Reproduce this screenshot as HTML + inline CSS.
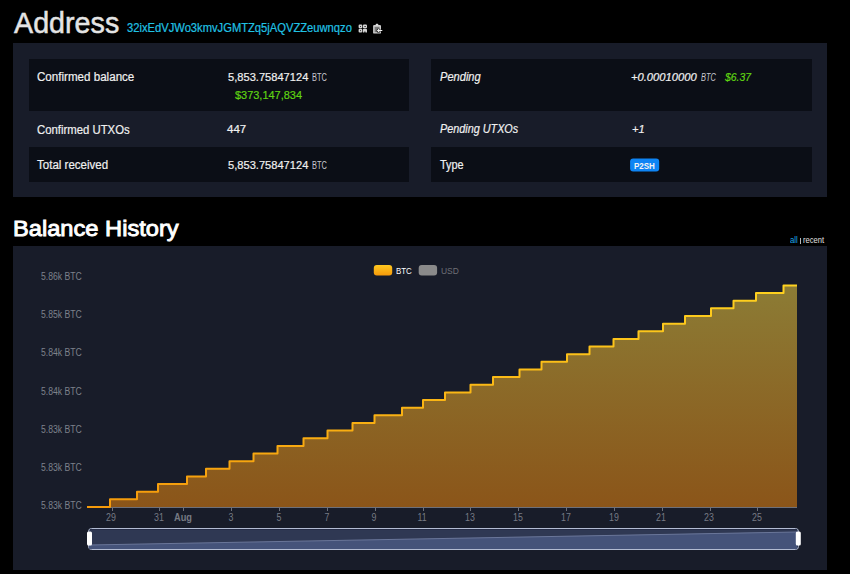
<!DOCTYPE html>
<html><head><meta charset="utf-8"><style>
html,body{margin:0;padding:0;background:#000;width:850px;height:574px;overflow:hidden}
body{position:relative;font-family:"Liberation Sans",sans-serif}
.t{position:absolute;line-height:1;white-space:nowrap;z-index:3}
.panel{position:absolute;background:#181c29;z-index:0}
.dk{position:absolute;background:#0b0e16;z-index:1}
.ch{position:absolute;left:0;top:0;z-index:2}
</style></head><body>
<div class="panel" style="left:13px;top:43px;width:814px;height:154px"></div>
<div class="dk" style="left:29px;top:59px;width:380px;height:52px"></div>
<div class="dk" style="left:29px;top:147px;width:380px;height:35px"></div>
<div class="dk" style="left:431px;top:59px;width:381px;height:52px"></div>
<div class="dk" style="left:431px;top:147px;width:381px;height:35px"></div>
<svg class="ch" width="850" height="574" viewBox="0 0 850 574"><rect x="630.1" y="158.5" width="29.1" height="13" rx="3" fill="#0e84f4"/></svg>
<div class="t" style="left:13.60px;top:7.61px;font-size:30px;color:#e4e4e4;letter-spacing:0px;font-weight:normal;font-style:normal;transform:scaleX(0.9564);transform-origin:0 0;-webkit-text-stroke:0.5px currentColor;">Address</div>
<div class="t" style="left:127.00px;top:21.84px;font-size:12px;color:#20c2e4;letter-spacing:0px;font-weight:normal;font-style:normal;transform:scaleX(0.9324);transform-origin:0 0;-webkit-text-stroke:0.2px currentColor;">32ixEdVJWo3kmvJGMTZq5jAQVZZeuwnqzo</div>
<div class="t" style="left:37.00px;top:71.42px;font-size:12.5px;color:#f0f0f0;letter-spacing:0px;font-weight:normal;font-style:normal;transform:scaleX(0.9276);transform-origin:0 0;-webkit-text-stroke:0.2px currentColor;">Confirmed balance</div>
<div class="t" style="left:227.80px;top:72.27px;font-size:11.5px;color:#f0f0f0;letter-spacing:0px;font-weight:normal;font-style:normal;transform:scaleX(0.9663);transform-origin:0 0;-webkit-text-stroke:0.2px currentColor;">5,853.75847124</div>
<div class="t" style="left:311.70px;top:73.33px;font-size:10px;color:#c8c8d0;letter-spacing:0px;font-weight:normal;font-style:normal;transform:scaleX(0.7400);transform-origin:0 0;">BTC</div>
<div class="t" style="left:234.90px;top:89.87px;font-size:11.5px;color:#5fd312;letter-spacing:0px;font-weight:normal;font-style:normal;transform:scaleX(0.9521);transform-origin:0 0;-webkit-text-stroke:0.2px currentColor;">$373,147,834</div>
<div class="t" style="left:37.00px;top:124.42px;font-size:12.5px;color:#f0f0f0;letter-spacing:0px;font-weight:normal;font-style:normal;transform:scaleX(0.9078);transform-origin:0 0;-webkit-text-stroke:0.2px currentColor;">Confirmed UTXOs</div>
<div class="t" style="left:227.00px;top:123.77px;font-size:11.5px;color:#f0f0f0;letter-spacing:0px;font-weight:normal;font-style:normal;transform:scaleX(1.0000);transform-origin:0 0;-webkit-text-stroke:0.2px currentColor;">447</div>
<div class="t" style="left:37.00px;top:159.42px;font-size:12.5px;color:#f0f0f0;letter-spacing:0px;font-weight:normal;font-style:normal;transform:scaleX(0.9221);transform-origin:0 0;-webkit-text-stroke:0.2px currentColor;">Total received</div>
<div class="t" style="left:227.80px;top:160.07px;font-size:11.5px;color:#f0f0f0;letter-spacing:0px;font-weight:normal;font-style:normal;transform:scaleX(0.9663);transform-origin:0 0;-webkit-text-stroke:0.2px currentColor;">5,853.75847124</div>
<div class="t" style="left:311.70px;top:161.13px;font-size:10px;color:#c8c8d0;letter-spacing:0px;font-weight:normal;font-style:normal;transform:scaleX(0.7400);transform-origin:0 0;">BTC</div>
<div class="t" style="left:440.00px;top:71.22px;font-size:12.5px;color:#f0f0f0;letter-spacing:0px;font-weight:normal;font-style:italic;transform:scaleX(0.8870);transform-origin:0 0;-webkit-text-stroke:0.2px currentColor;">Pending</div>
<div class="t" style="left:631.20px;top:71.87px;font-size:11.5px;color:#f0f0f0;letter-spacing:0px;font-weight:normal;font-style:italic;transform:scaleX(0.9735);transform-origin:0 0;-webkit-text-stroke:0.2px currentColor;">+0.00010000</div>
<div class="t" style="left:700.70px;top:73.13px;font-size:10px;color:#c8c8d0;letter-spacing:0px;font-weight:normal;font-style:italic;transform:scaleX(0.7400);transform-origin:0 0;">BTC</div>
<div class="t" style="left:725.40px;top:71.87px;font-size:11.5px;color:#5fd312;letter-spacing:0px;font-weight:normal;font-style:italic;transform:scaleX(0.9067);transform-origin:0 0;-webkit-text-stroke:0.2px currentColor;">$6.37</div>
<div class="t" style="left:440.30px;top:122.62px;font-size:12.5px;color:#f0f0f0;letter-spacing:0px;font-weight:normal;font-style:italic;transform:scaleX(0.8656);transform-origin:0 0;-webkit-text-stroke:0.2px currentColor;">Pending UTXOs</div>
<div class="t" style="left:631.50px;top:124.47px;font-size:11.5px;color:#f0f0f0;letter-spacing:0px;font-weight:normal;font-style:italic;transform:scaleX(0.9615);transform-origin:0 0;-webkit-text-stroke:0.2px currentColor;">+1</div>
<div class="t" style="left:440.30px;top:159.42px;font-size:12.5px;color:#f0f0f0;letter-spacing:0px;font-weight:normal;font-style:normal;transform:scaleX(0.8704);transform-origin:0 0;-webkit-text-stroke:0.2px currentColor;">Type</div>
<div class="t" style="left:634.00px;top:162.28px;font-size:9px;color:#f4f4f4;letter-spacing:0px;font-weight:bold;font-style:normal;transform:scaleX(0.8875);transform-origin:0 0;">P2SH</div>
<div class="t" style="left:12.85px;top:217.75px;font-size:22.5px;color:#ffffff;letter-spacing:0px;font-weight:normal;font-style:normal;transform:scaleX(1.0516);transform-origin:0 0;-webkit-text-stroke:0.9px currentColor;">Balance History</div>
<div class="t" style="left:790.20px;top:235.98px;font-size:9px;color:#1ea8ea;letter-spacing:0px;font-weight:normal;font-style:normal;transform:scaleX(0.8667);transform-origin:0 0;">all</div>
<div class="t" style="left:803.00px;top:235.98px;font-size:9px;color:#e0e0e0;letter-spacing:0px;font-weight:normal;font-style:normal;transform:scaleX(0.8400);transform-origin:0 0;">recent</div>
<div class="t" style="left:395.80px;top:266.16px;font-size:9.5px;color:#ffffff;letter-spacing:0px;font-weight:normal;font-style:normal;transform:scaleX(0.8316);transform-origin:0 0;">BTC</div>
<div class="t" style="left:441.00px;top:266.16px;font-size:9.5px;color:#6e6f76;letter-spacing:0px;font-weight:normal;font-style:normal;transform:scaleX(0.8900);transform-origin:0 0;">USD</div>
<div class="t" style="left:41.00px;top:271.54px;font-size:10px;color:#7d818b;letter-spacing:0px;font-weight:normal;font-style:normal;transform:scaleX(0.8638);transform-origin:0 0;">5.86k BTC</div>
<div class="t" style="left:41.00px;top:309.71px;font-size:10px;color:#7d818b;letter-spacing:0px;font-weight:normal;font-style:normal;transform:scaleX(0.8638);transform-origin:0 0;">5.85k BTC</div>
<div class="t" style="left:41.00px;top:347.88px;font-size:10px;color:#7d818b;letter-spacing:0px;font-weight:normal;font-style:normal;transform:scaleX(0.8638);transform-origin:0 0;">5.84k BTC</div>
<div class="t" style="left:41.00px;top:387.05px;font-size:10px;color:#7d818b;letter-spacing:0px;font-weight:normal;font-style:normal;transform:scaleX(0.8638);transform-origin:0 0;">5.84k BTC</div>
<div class="t" style="left:41.00px;top:425.22px;font-size:10px;color:#7d818b;letter-spacing:0px;font-weight:normal;font-style:normal;transform:scaleX(0.8638);transform-origin:0 0;">5.83k BTC</div>
<div class="t" style="left:41.00px;top:463.39px;font-size:10px;color:#7d818b;letter-spacing:0px;font-weight:normal;font-style:normal;transform:scaleX(0.8638);transform-origin:0 0;">5.83k BTC</div>
<div class="t" style="left:41.00px;top:500.56px;font-size:10px;color:#7d818b;letter-spacing:0px;font-weight:normal;font-style:normal;transform:scaleX(0.8638);transform-origin:0 0;">5.83k BTC</div>
<div class="panel" style="left:13px;top:246px;width:814px;height:324px"></div>
<div style="position:absolute;left:800px;top:237.5px;width:1px;height:6.5px;background:#b8b8b8"></div>
<svg class="ch" width="850" height="574" viewBox="0 0 850 574"><defs><linearGradient id="lg" x1="0" y1="285" x2="0" y2="507" gradientUnits="userSpaceOnUse"><stop offset="0" stop-color="#ffd21f"/><stop offset="1" stop-color="#f59a0b"/></linearGradient><linearGradient id="ag" x1="0" y1="285" x2="0" y2="507" gradientUnits="userSpaceOnUse"><stop offset="0" stop-color="#8c7c35"/><stop offset="1" stop-color="#8b5519"/></linearGradient><linearGradient id="sw" x1="0" y1="0" x2="0" y2="1"><stop offset="0" stop-color="#ffc820"/><stop offset="1" stop-color="#f59a0b"/></linearGradient></defs><path d="M87 507 H110 V499.36 H137 V491.72 H158 V484.08 H187 V476.44 H206 V468.80 H229.5 V461.16 H253.5 V453.52 H277.5 V445.88 H303.5 V438.24 H327.5 V430.60 H352.5 V422.96 H374.5 V415.32 H402 V407.68 H423 V400.04 H445 V392.40 H470.5 V384.76 H493 V377.12 H519.5 V369.48 H541.5 V361.84 H567 V354.20 H589.5 V346.56 H613.5 V338.92 H638.5 V331.28 H663 V323.64 H685 V316.00 H711 V308.36 H733.5 V300.72 H756 V293.08 H783.5 V285.44 H797 V507 H87 Z" fill="url(#ag)"/><line x1="87" y1="507.5" x2="797" y2="507.5" stroke="#6e7079" stroke-width="1"/><line x1="112.5" y1="507" x2="112.5" y2="511" stroke="#6e7079" stroke-width="1"/><line x1="159.5" y1="507" x2="159.5" y2="511" stroke="#6e7079" stroke-width="1"/><line x1="183.5" y1="507" x2="183.5" y2="511" stroke="#6e7079" stroke-width="1"/><line x1="231.5" y1="507" x2="231.5" y2="511" stroke="#6e7079" stroke-width="1"/><line x1="279.5" y1="507" x2="279.5" y2="511" stroke="#6e7079" stroke-width="1"/><line x1="327.5" y1="507" x2="327.5" y2="511" stroke="#6e7079" stroke-width="1"/><line x1="375.5" y1="507" x2="375.5" y2="511" stroke="#6e7079" stroke-width="1"/><line x1="423.5" y1="507" x2="423.5" y2="511" stroke="#6e7079" stroke-width="1"/><line x1="470.5" y1="507" x2="470.5" y2="511" stroke="#6e7079" stroke-width="1"/><line x1="518.5" y1="507" x2="518.5" y2="511" stroke="#6e7079" stroke-width="1"/><line x1="566.5" y1="507" x2="566.5" y2="511" stroke="#6e7079" stroke-width="1"/><line x1="614.5" y1="507" x2="614.5" y2="511" stroke="#6e7079" stroke-width="1"/><line x1="662.5" y1="507" x2="662.5" y2="511" stroke="#6e7079" stroke-width="1"/><line x1="710.5" y1="507" x2="710.5" y2="511" stroke="#6e7079" stroke-width="1"/><line x1="757.5" y1="507" x2="757.5" y2="511" stroke="#6e7079" stroke-width="1"/><path d="M87 507 H110 V499.36 H137 V491.72 H158 V484.08 H187 V476.44 H206 V468.80 H229.5 V461.16 H253.5 V453.52 H277.5 V445.88 H303.5 V438.24 H327.5 V430.60 H352.5 V422.96 H374.5 V415.32 H402 V407.68 H423 V400.04 H445 V392.40 H470.5 V384.76 H493 V377.12 H519.5 V369.48 H541.5 V361.84 H567 V354.20 H589.5 V346.56 H613.5 V338.92 H638.5 V331.28 H663 V323.64 H685 V316.00 H711 V308.36 H733.5 V300.72 H756 V293.08 H783.5 V285.44 H797" fill="none" stroke="url(#lg)" stroke-width="2" stroke-linejoin="round"/><rect x="373.8" y="265.1" width="18.4" height="10.3" rx="3" fill="url(#sw)"/><rect x="418.7" y="265.1" width="18.4" height="10.3" rx="3" fill="#8a8a8a"/></svg>
<div class="t" style="left:81.30px;top:512.53px;width:60px;text-align:center;font-size:10px;font-weight:normal;color:#767a84;transform:scaleX(0.8818);transform-origin:30px 0">29</div>
<div class="t" style="left:129.14px;top:512.53px;width:60px;text-align:center;font-size:10px;font-weight:normal;color:#767a84;transform:scaleX(0.8818);transform-origin:30px 0">31</div>
<div class="t" style="left:153.06px;top:512.53px;width:60px;text-align:center;font-size:10px;font-weight:bold;color:#767a84;transform:scaleX(0.9263);transform-origin:30px 0">Aug</div>
<div class="t" style="left:200.90px;top:512.53px;width:60px;text-align:center;font-size:10px;font-weight:normal;color:#767a84;transform:scaleX(0.8818);transform-origin:30px 0">3</div>
<div class="t" style="left:248.74px;top:512.53px;width:60px;text-align:center;font-size:10px;font-weight:normal;color:#767a84;transform:scaleX(0.8818);transform-origin:30px 0">5</div>
<div class="t" style="left:296.58px;top:512.53px;width:60px;text-align:center;font-size:10px;font-weight:normal;color:#767a84;transform:scaleX(0.8818);transform-origin:30px 0">7</div>
<div class="t" style="left:344.42px;top:512.53px;width:60px;text-align:center;font-size:10px;font-weight:normal;color:#767a84;transform:scaleX(0.8818);transform-origin:30px 0">9</div>
<div class="t" style="left:392.26px;top:512.53px;width:60px;text-align:center;font-size:10px;font-weight:normal;color:#767a84;transform:scaleX(0.8818);transform-origin:30px 0">11</div>
<div class="t" style="left:440.10px;top:512.53px;width:60px;text-align:center;font-size:10px;font-weight:normal;color:#767a84;transform:scaleX(0.8818);transform-origin:30px 0">13</div>
<div class="t" style="left:487.94px;top:512.53px;width:60px;text-align:center;font-size:10px;font-weight:normal;color:#767a84;transform:scaleX(0.8818);transform-origin:30px 0">15</div>
<div class="t" style="left:535.78px;top:512.53px;width:60px;text-align:center;font-size:10px;font-weight:normal;color:#767a84;transform:scaleX(0.8818);transform-origin:30px 0">17</div>
<div class="t" style="left:583.62px;top:512.53px;width:60px;text-align:center;font-size:10px;font-weight:normal;color:#767a84;transform:scaleX(0.8818);transform-origin:30px 0">19</div>
<div class="t" style="left:631.46px;top:512.53px;width:60px;text-align:center;font-size:10px;font-weight:normal;color:#767a84;transform:scaleX(0.8818);transform-origin:30px 0">21</div>
<div class="t" style="left:679.30px;top:512.53px;width:60px;text-align:center;font-size:10px;font-weight:normal;color:#767a84;transform:scaleX(0.8818);transform-origin:30px 0">23</div>
<div class="t" style="left:727.14px;top:512.53px;width:60px;text-align:center;font-size:10px;font-weight:normal;color:#767a84;transform:scaleX(0.8818);transform-origin:30px 0">25</div>
<svg class="ch" width="850" height="574" viewBox="0 0 850 574">
<rect x="88.5" y="528.5" width="710" height="21" rx="3" fill="#2f3853" stroke="#b2bbd2" stroke-width="1"/>
<line x1="90" y1="529.5" x2="797" y2="529.5" stroke="#262d47" stroke-width="1"/>
<path d="M89 545 L797 532 V549 H89 Z" fill="#45537a"/>
<path d="M89 545 L797 532" stroke="#6a7699" stroke-width="1" fill="none"/>
<rect x="87" y="531.5" width="5" height="14" rx="1.5" fill="#ffffff"/>
<rect x="795.8" y="531.5" width="5" height="14" rx="1.5" fill="#ffffff"/>
</svg>
<svg class="ch" width="850" height="574" viewBox="0 0 850 574">
<g fill="#d2d2d2">
<rect x="358.6" y="24.6" width="3.7" height="3.7" rx="1.1"/>
<rect x="362.9" y="24.6" width="4.1" height="3.7" rx="1.1"/>
<rect x="358.6" y="28.8" width="3.7" height="3.7" rx="1.1"/>
<path d="M362.9 29.9 a1.1 1.1 0 0 1 1.1 -1.1 h1.9 a1.1 1.1 0 0 1 1.1 1.1 v2.6 h-1.6 v-1 h-1 v1 h-1.5 z"/>
</g>
<g fill="#1a1a1a">
<rect x="360" y="26" width="0.9" height="0.9"/>
<rect x="364.3" y="26.1" width="1.6" height="0.8"/>
<rect x="360" y="30.2" width="0.9" height="0.9"/>
</g>
<rect x="373.1" y="24.9" width="7.9" height="8.7" rx="1.2" fill="#cdcdcd"/>
<rect x="374.6" y="26.8" width="4.9" height="5.4" fill="#7a7a7a"/>
<rect x="375.7" y="23.8" width="2.6" height="2" rx="0.8" fill="#e0e0e0"/>
<circle cx="378.6" cy="30.7" r="2.1" fill="#0a0a0a"/>
<path d="M382.3 30.5 h-4.6 m1.6 -1.6 l-1.6 1.6 l1.6 1.6" stroke="#f2f2f2" stroke-width="1.2" fill="none"/>
</svg>
</body></html>
